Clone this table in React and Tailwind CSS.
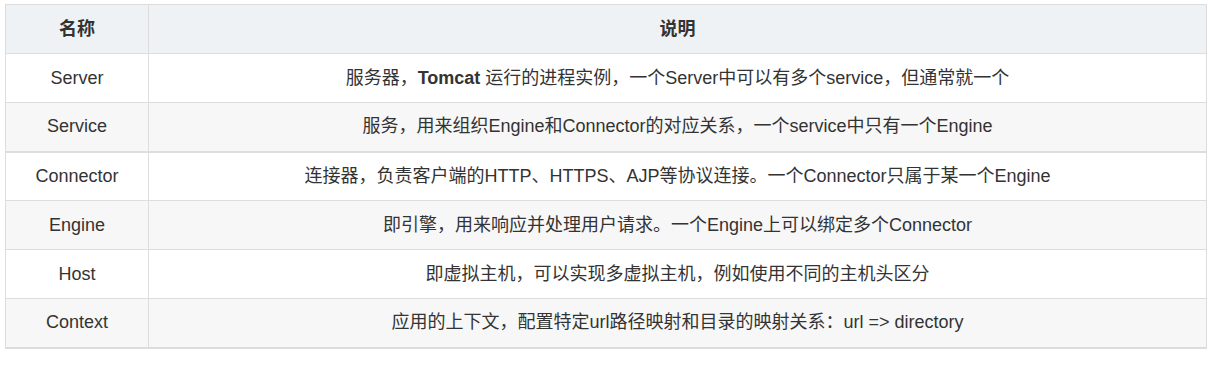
import React from 'react'

const rows = [
    ['Server', <>服务器，<b>Tomcat</b> 运行的进程实例，一个Server中可以有多个service，但通常就一个</>],
    ['Service', '服务，用来组织Engine和Connector的对应关系，一个service中只有一个Engine'],
    ['Connector', '连接器，负责客户端的HTTP、HTTPS、AJP等协议连接。一个Connector只属于某一个Engine'],
    ['Engine', '即引擎，用来响应并处理用户请求。一个Engine上可以绑定多个Connector'],
    ['Host', '即虚拟主机，可以实现多虚拟主机，例如使用不同的主机头区分'],
    ['Context', '应用的上下文，配置特定url路径映射和目录的映射关系：url => directory'],
]

const App = () => {
    return (
        <div className="bg-white w-[1216px] h-[366px] pt-[4px] pl-[5px]" style={{ fontFamily: '"Liberation Sans", "Noto Sans CJK SC", sans-serif' }}>
            <table className="w-[1202px] border-collapse text-[18px] text-[#333]">
                <thead>
                    <tr className="bg-[#eef2f5]">
                        <th className="w-[143px] h-[49px] border border-[#dddddd] font-bold text-center">名称</th>
                        <th className="h-[49px] border border-[#dddddd] font-bold text-center">说明</th>
                    </tr>
                </thead>
                <tbody>
                    {rows.map(([name, desc], i) => (
                        <tr
                            key={name}
                            className={`${i % 2 === 1 ? 'bg-[#f7f7f7]' : 'bg-white'} ${i === 1 || i === 5 ? 'border-b-2 border-[#dddddd]' : ''}`}
                        >
                            <td className="h-[49px] border border-[#dddddd] text-center">{name}</td>
                            <td className="h-[49px] border border-[#dddddd] text-center">{desc}</td>
                        </tr>
                    ))}
                </tbody>
            </table>
        </div>
    )
}

export default App
